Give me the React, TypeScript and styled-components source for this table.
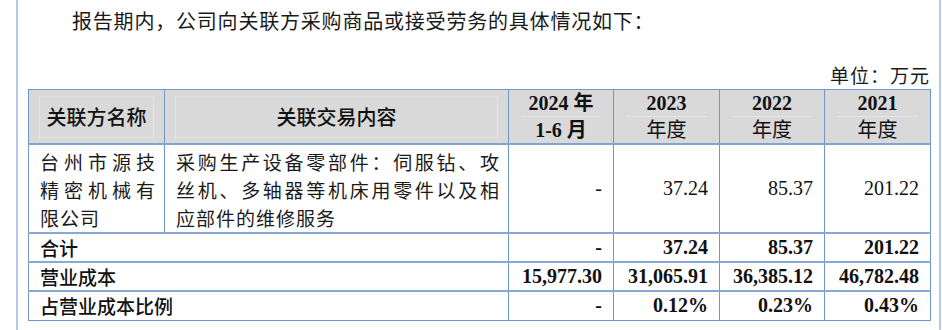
import styled, { createGlobalStyle } from 'styled-components';

const GlobalStyle = createGlobalStyle`
  html, body {
    margin: 0;
    padding: 0;
    background: #ffffff;
  }
`;

const cjk = `"Noto Sans CJK SC", "Noto Sans", sans-serif`;
const serif = `"Liberation Serif", "Noto Sans CJK SC", serif`;

type Row = {
  label: string;
  values: string[];
};

const years = [
  ['2024 年', '1-6 月'],
  ['2023', '年度'],
  ['2022', '年度'],
  ['2021', '年度'],
];

const totals: Row[] = [
  { label: '合计', values: ['-', '37.24', '85.37', '201.22'] },
  { label: '营业成本', values: ['15,977.30', '31,065.91', '36,385.12', '46,782.48'] },
  { label: '占营业成本比例', values: ['-', '0.12%', '0.23%', '0.43%'] },
];

const App = () => {
  return (
    <>
      <GlobalStyle />
      <Frame>
        <Intro>报告期内，公司向关联方采购商品或接受劳务的具体情况如下：</Intro>
        <Unit>单位：万元</Unit>
        <Table>
          <colgroup>
            <col style={{ width: 136 }} />
            <col style={{ width: 344 }} />
            <col style={{ width: 105 }} />
            <col style={{ width: 106 }} />
            <col style={{ width: 105 }} />
            <col style={{ width: 106 }} />
          </colgroup>
          <thead>
            <tr>
              <HeadCell>
                <HeadLine>关联方名称</HeadLine>
              </HeadCell>
              <HeadCell>
                <HeadLine>关联交易内容</HeadLine>
              </HeadCell>
              {years.map((y, i) => (
                <HeadCell key={y[0]}>
                  <YearLine>{y[0]}</YearLine>
                  <YearLine $split $plain={i > 0}>
                    {y[1]}
                  </YearLine>
                </HeadCell>
              ))}
            </tr>
          </thead>
          <tbody>
            <DataRow>
              <TextCell>
                <Line $justify>台州市源技</Line>
                <Line $justify>精密机械有</Line>
                <Line>限公司</Line>
              </TextCell>
              <TextCell>
                <Line $justify>采购生产设备零部件：伺服钻、攻</Line>
                <Line $justify>丝机、多轴器等机床用零件以及相</Line>
                <Line>应部件的维修服务</Line>
              </TextCell>
              <NumCell>-</NumCell>
              <NumCell>37.24</NumCell>
              <NumCell>85.37</NumCell>
              <NumCell>201.22</NumCell>
            </DataRow>
            {totals.map((r) => (
              <TotalRow key={r.label}>
                <TotalLabel colSpan={2}>{r.label}</TotalLabel>
                {r.values.map((v, i) => (
                  <NumCell key={i} $bold>
                    {v}
                  </NumCell>
                ))}
              </TotalRow>
            ))}
          </tbody>
        </Table>
      </Frame>
    </>
  );
};

export default App;

const Frame = styled.div`
  margin-left: 16px;
  width: 921px;
  height: 330px;
  border-left: 2px solid #b3c9e6;
  border-right: 2px solid #b3c9e6;
  box-sizing: content-box;
`;

const Intro = styled.div`
  padding: 7px 0 0 54px;
  font-family: ${cjk};
  font-size: 20px;
  line-height: 28px;
  letter-spacing: 0.8px;
  color: #1a1a1a;
`;

const Unit = styled.div`
  margin-top: 26px;
  width: 912px;
  text-align: right;
  font-family: ${cjk};
  font-size: 19px;
  line-height: 28px;
  letter-spacing: 1px;
  color: #1a1a1a;
`;

const Table = styled.table`
  margin-left: 10px;
  width: 902px;
  border-collapse: collapse;
  table-layout: fixed;
  border: 1.5px solid #6e98cc;
  color: #111111;

  td,
  th {
    border: 1px solid #6e98cc;
    padding: 0;
  }
`;

const HeadCell = styled.th`
  height: 53px;
  background: #d9d9d9;
  font-family: ${serif};
  font-weight: 700;
  font-size: 20px;
  text-align: center;
  vertical-align: middle;
  border-bottom: 2px solid #7fa4d4 !important;
`;

const HeadLine = styled.div`
  margin: 0 10px;
  font-family: ${cjk};
  font-weight: 500;
  line-height: 40px;
  border: 1px solid #e4e4e4;
`;

const YearLine = styled.div<{ $split?: boolean; $plain?: boolean }>`
  margin: 0 12px;
  line-height: 26px;
  font-weight: ${({ $plain }) => ($plain ? 400 : 700)};
  border-top: ${({ $split }) => ($split ? '1px solid #e6e6e6' : 'none')};
`;

const DataRow = styled.tr`
  height: 83px;
`;

const TextCell = styled.td`
  padding: 3px 8px 0 11px !important;
  vertical-align: top;
  font-family: ${cjk};
  font-size: 19px;
  color: #1a1a1a;
`;

const Line = styled.div<{ $justify?: boolean }>`
  line-height: 28px;
  text-align: ${({ $justify }) => ($justify ? 'justify' : 'left')};
  text-align-last: ${({ $justify }) => ($justify ? 'justify' : 'left')};
  letter-spacing: 1px;
`;

const NumCell = styled.td<{ $bold?: boolean }>`
  padding-right: 11px !important;
  text-align: right;
  vertical-align: middle;
  font-family: ${serif};
  font-size: 20px;
  font-weight: ${({ $bold }) => ($bold ? 700 : 400)};
`;

const TotalRow = styled.tr`
  height: 29px;

  td {
    border-top: 2px solid #86a9d6;
  }
`;

const TotalLabel = styled.td`
  padding-left: 11px !important;
  font-family: ${cjk};
  font-size: 19px;
  font-weight: 500;
  line-height: 26px;
`;
